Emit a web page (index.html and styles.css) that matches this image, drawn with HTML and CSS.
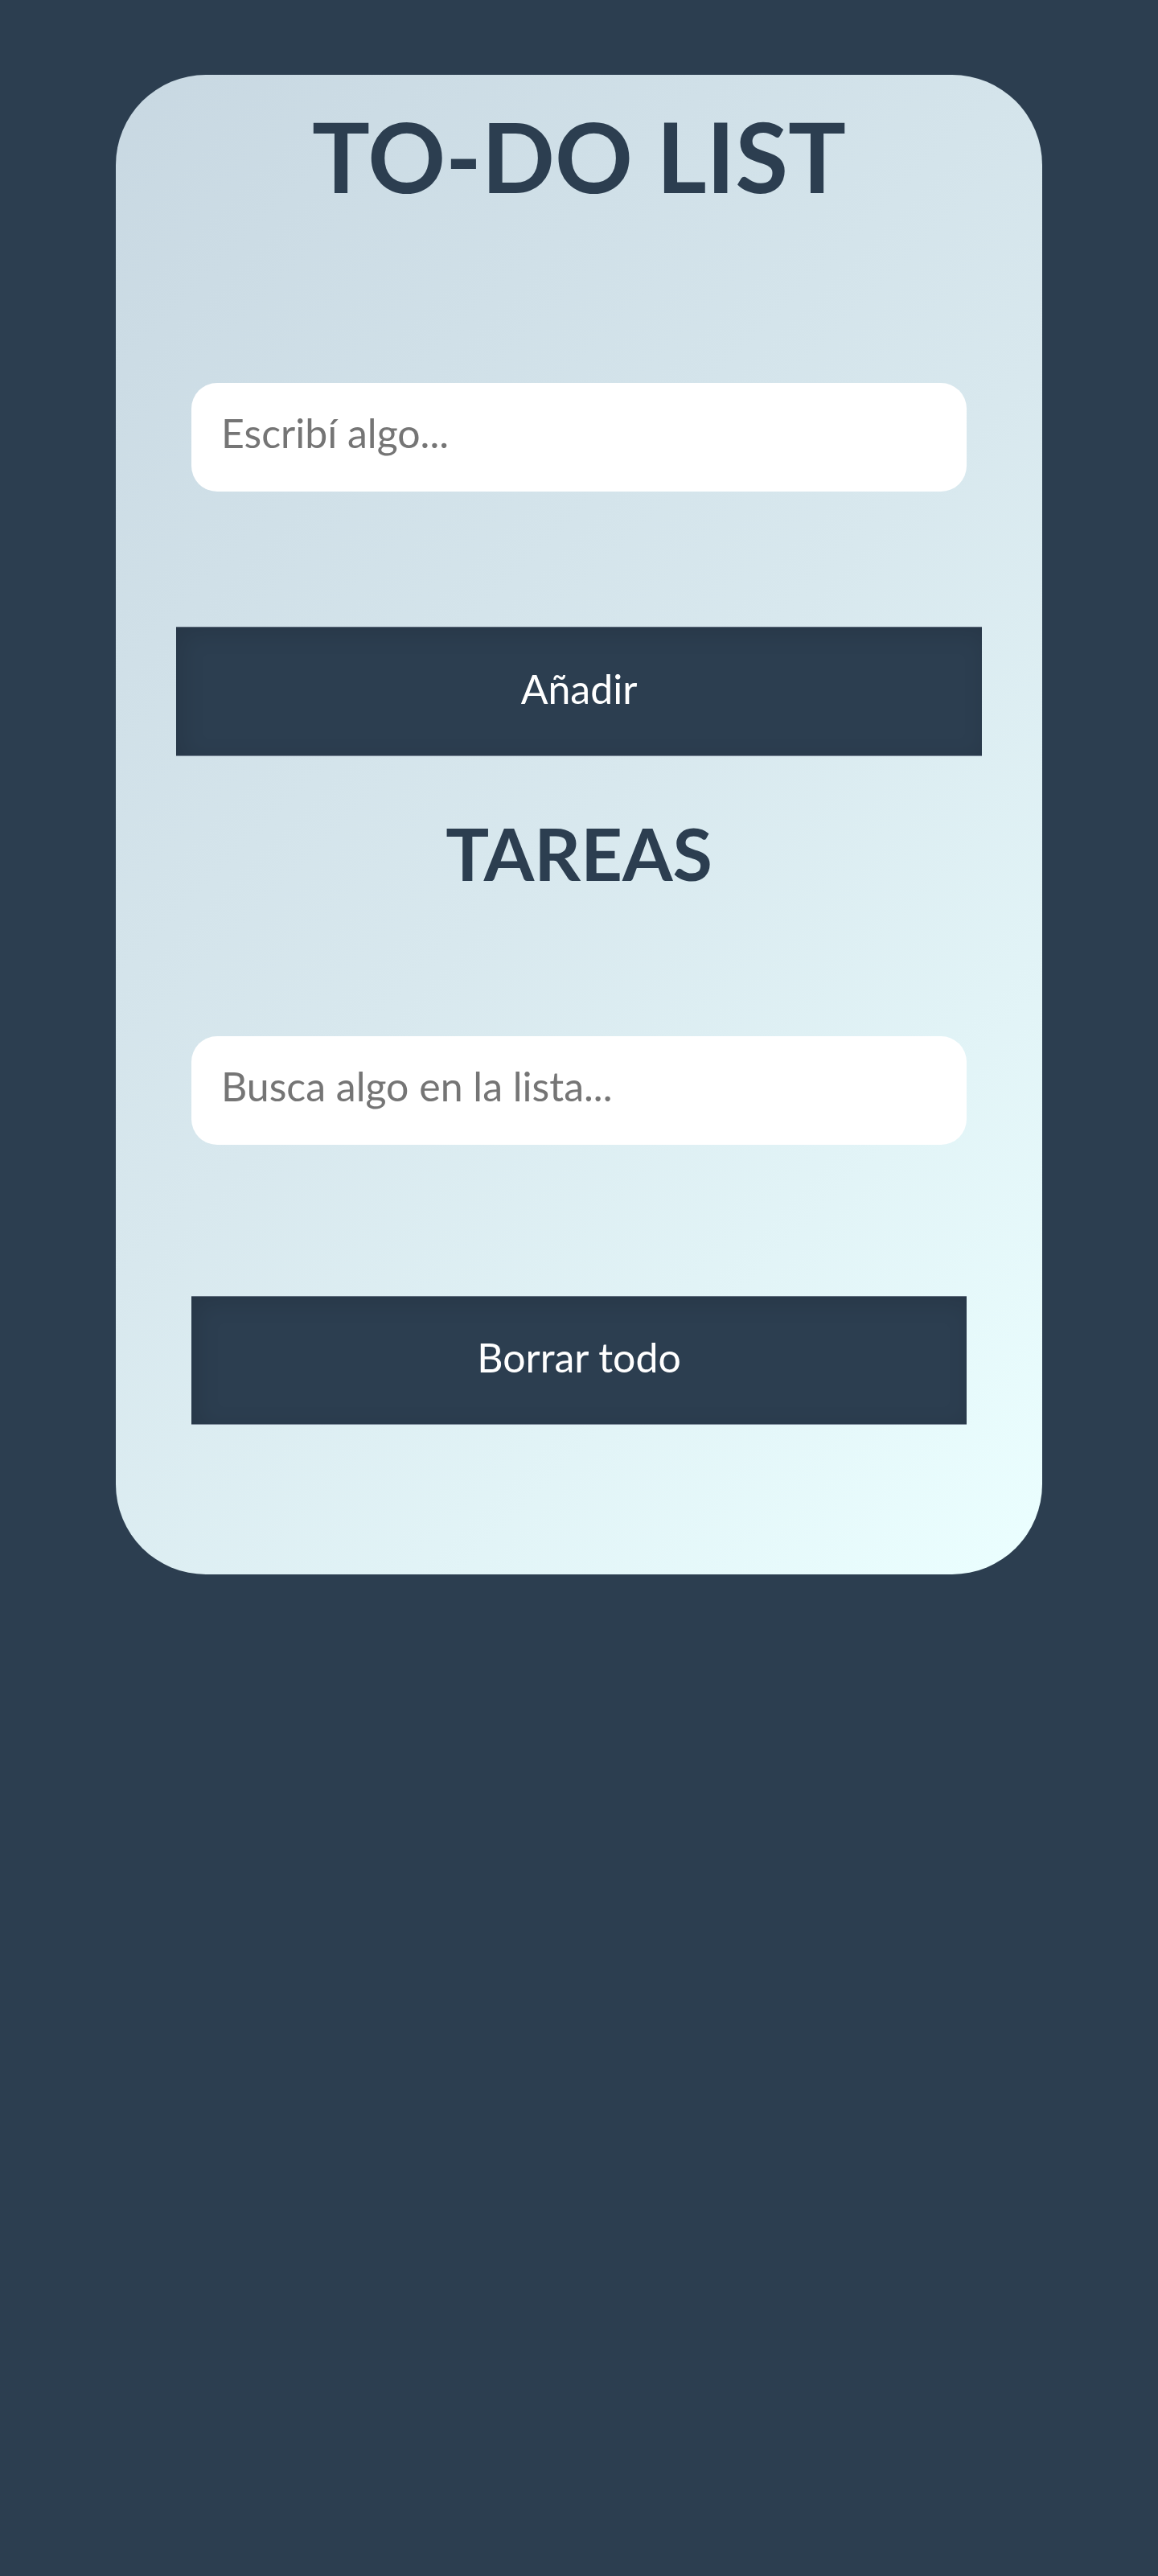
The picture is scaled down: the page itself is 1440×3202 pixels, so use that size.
FILE: index.html
```html
<!DOCTYPE html>
<html lang="es">
<head>
<meta charset="utf-8">
<title>To-Do List</title>
<link rel="stylesheet" href="styles.css">
</head>
<body>
<main class="card">
  <h1 class="title">TO-DO LIST</h1>
  <input class="field field-add" type="text" placeholder="Escribí algo...">
  <button class="btn btn-add" type="button">Añadir</button>
  <h2 class="subtitle">TAREAS</h2>
  <input class="field field-search" type="text" placeholder="Busca algo en la lista...">
  <button class="btn btn-clear" type="button">Borrar todo</button>
  <ul class="list"></ul>
</main>
</body>
</html>
```

FILE: styles.css
```css
html, body {
  margin: 0;
  padding: 0;
}
body {
  background: #2c3e50;
  font-family: Lato, "Noto Sans", sans-serif;
  min-height: 3202px;
}
.card {
  width: 1152px;
  margin: 93px auto 0;
  box-sizing: border-box;
  padding: 41px 0 186px;
  border-radius: 112px;
  background: linear-gradient(135deg, #c8d8e2 0%, #d8e8ee 50%, #ebffff 100%);
  display: flex;
  flex-direction: column;
  align-items: center;
}
.title {
  margin: 0;
  font-size: 120px;
  line-height: 1;
  font-weight: 700;
  color: #2c3e50;
}
.subtitle {
  margin: 75px 0 0;
  font-size: 90px;
  line-height: 1;
  font-weight: 700;
  color: #2c3e50;
}
.field {
  display: block;
  box-sizing: border-box;
  width: 964px;
  height: 135px;
  border: none;
  outline: none;
  border-radius: 32px;
  background: #fff;
  padding: 0 0 12px 37px;
  font-family: Lato, "Noto Sans", sans-serif;
  font-size: 50px;
  color: #333;
}
.field::placeholder {
  color: #757575;
}
.field-add {
  margin-top: 222px;
}
.field-search {
  margin-top: 183px;
}
.btn {
  display: flex;
  align-items: center;
  justify-content: center;
  box-sizing: border-box;
  border: none;
  border-top: 1px solid #5d6b7b;
  border-bottom: 1px solid #7a8898;
  background: #2c3e50;
  color: #fff;
  font-family: Lato, "Noto Sans", sans-serif;
  font-size: 50px;
  padding: 0 0 8px;
  box-shadow: inset 6px 6px 30px rgba(0, 0, 0, 0.12);
  cursor: pointer;
}
.btn-add {
  width: 1002px;
  height: 161px;
  margin-top: 168px;
}
.btn-clear {
  width: 964px;
  height: 160px;
  margin-top: 188px;
}
.list {
  margin: 0;
  padding: 0;
  list-style: none;
}
```
